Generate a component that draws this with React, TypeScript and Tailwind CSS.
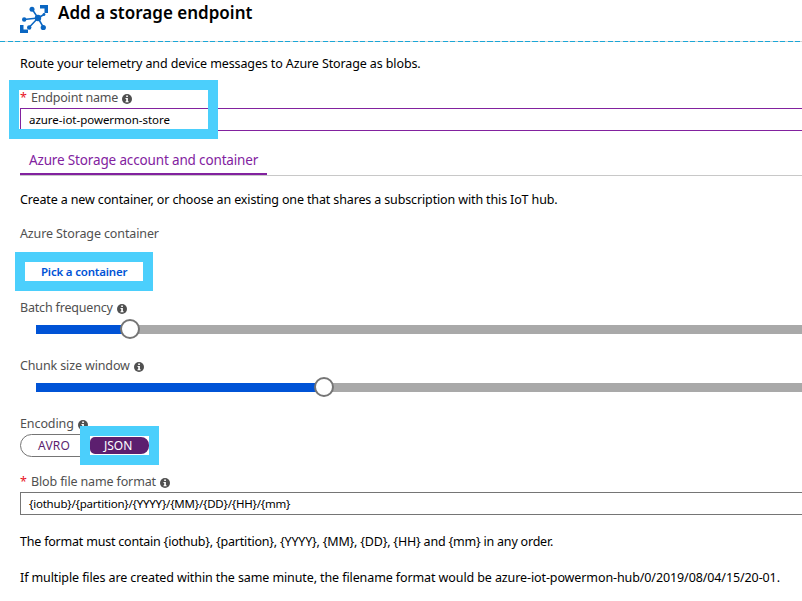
import type { ReactNode } from "react";

function Info() {
  return (
    <svg className="relative top-px ml-1 h-[10px] w-[10px] shrink-0" viewBox="0 0 10 10">
      <circle cx="5" cy="5" r="5" fill="#505050" />
      <path d="M4.200 1.600h1.700v1.500H4.200zM3.500 4h2.400v3.300h.7v1H3.500v-1h.7V5h-.7z" fill="#fff" />
    </svg>
  );
}

function Row({ className, children }: { className: string; children: ReactNode }) {
  return <div className={`flex shrink-0 items-center ${className}`}>{children}</div>;
}

function Slider({ fill }: { fill: string }) {
  return (
    <div className="ml-4 flex h-5 items-center">
      <div className={`h-[9px] bg-[#0053d6] ${fill}`} />
      <div className="z-1 -mx-1 h-5 w-5 shrink-0 rounded-full border-2 border-[#757575] bg-white" />
      <div className="h-[9px] flex-1 bg-[#a9a9a9]" />
    </div>
  );
}

export default function App() {
  return (
    <div className="flex h-[601px] w-[802px] flex-col overflow-hidden whitespace-nowrap bg-white font-['Noto_Sans',sans-serif] text-[12.5px] leading-5 text-black">
      <header className="shrink-0">
        <div className="flex h-[41px] items-start pl-5">
          <svg className="mt-[5px] h-7 w-7" viewBox="0 0 28 28" fill="#0a66c2" stroke="#0a66c2">
            <path d="M20 0h8v8h-3.500V3.500H20zM0 20h3.500v4.500H8V28H0z" stroke="none" />
            <path d="M18 13 12 4M18 13 4 14.500M18 13 9 22.500M18 13 23.500 22.500M18 13 24 9.500" strokeWidth="1.500" fill="none" />
            <g stroke="none">
              <circle cx="18" cy="13" r="3.200" />
              <circle cx="12" cy="4.200" r="2.500" />
              <circle cx="4.200" cy="14.500" r="2.200" />
              <circle cx="9.200" cy="22.500" r="2.200" />
              <circle cx="23.300" cy="22.500" r="2.600" />
              <circle cx="24" cy="9.500" r="1.400" />
            </g>
          </svg>
          <h1 className="ml-[10px] mt-[1px] text-[17px] font-semibold leading-6">Add a storage endpoint</h1>
        </div>
        <div className="h-px bg-[repeating-linear-gradient(90deg,#1ba6d6_0_5px,#d4d4d4_5px_7.5px)]" />
      </header>
      <main className="flex flex-col pl-5">
        <Row className="mt-[12px] h-5"><span className="tracking-[-0.115px]">Route your telemetry and device messages to Azure Storage as blobs.</span></Row>
        <Row className="mt-[14px] h-5 text-[#505050]"><span className="w-[11px] text-[#e81123]">*</span><span className="tracking-[-0.2px]">Endpoint name</span><Info /></Row>
        <Row className="h-[23px] border-y border-l border-[#82229f] pl-2 text-[11.5px]"><span className="tracking-[-0.03px]">azure-iot-powermon-store</span></Row>
        <div className="mt-[15px] flex h-[30px] border-b border-[#c8c8c8]">
          <div className="-mb-px flex h-[29px] w-[247px] items-center border-b-2 border-[#82229f] pl-[9px] text-[13.5px] text-[#82229f]"><span className="tracking-[-0.15px]">Azure Storage account and container</span></div>
        </div>
        <Row className="mt-[14px] h-5"><span className="tracking-[-0.137px]">Create a new container, or choose an existing one that shares a subscription with this IoT hub.</span></Row>
        <Row className="mt-[14px] h-5 text-[#505050]"><span className="tracking-[-0.12px]">Azure Storage container</span></Row>
        <Row className="mt-[18px] h-5 pl-[21px] text-[11.5px] font-semibold text-[#0053d6]"><span className="tracking-[-0.2px]">Pick a container</span></Row>
        <Row className="mt-4 h-5 text-[#505050]"><span className="tracking-[-0.18px]">Batch frequency</span><Info /></Row>
        <div className="mt-px"><Slider fill="w-[88px]" /></div>
        <Row className="mt-[17px] h-5 text-[#505050]"><span className="tracking-[-0.13px]">Chunk size window</span><Info /></Row>
        <div className="mt-px"><Slider fill="w-[282px]" /></div>
        <Row className="mt-[17px] h-5 text-[#505050]"><span className="tracking-[-0.1px]">Encoding</span><Info /></Row>
        <Row className="h-[23px] w-[130px] rounded-full border border-[#757575] pl-[17px] text-[12px] text-[#5c1f6f]"><span className="tracking-[0.2px]">AVRO</span></Row>
        <Row className="mt-[15px] h-5 text-[#505050]"><span className="w-[11px] text-[#e81123]">*</span><span className="tracking-[-0.14px]">Blob file name format</span><Info /></Row>
        <Row className="h-[23px] border-y border-l border-[#757575] pl-2 text-[11.5px]"><span className="tracking-[-0.21px]">{"{iothub}/{partition}/{YYYY}/{MM}/{DD}/{HH}/{mm}"}</span></Row>
        <Row className="mt-[17px] h-5"><span className="tracking-[-0.21px]">{"The format must contain {iothub}, {partition}, {YYYY}, {MM}, {DD}, {HH} and {mm} in any order."}</span></Row>
        <Row className="mt-4 h-5"><span className="tracking-[-0.103px]">If multiple files are created within the same minute, the filename format would be azure-iot-powermon-hub/0/2019/08/04/15/20-01.</span></Row>
      </main>
      <div className="absolute left-[9px] top-[80px] h-[59px] w-[209px] border-10 border-[#4bcffc]" />
      <div className="absolute left-[15px] top-[252px] h-[39px] w-[138px] border-10 border-[#4bcffc]" />
      <div className="absolute left-[80px] top-[426px] flex h-[39px] w-[79px] items-center border-10 border-[#4bcffc] bg-white">
        <div className="flex h-[17px] w-[59px] items-center rounded-l-[5px] rounded-r-lg bg-[#5c1f6f] pl-[14px] text-[12px] text-white">JSON</div>
      </div>
    </div>
  );
}
